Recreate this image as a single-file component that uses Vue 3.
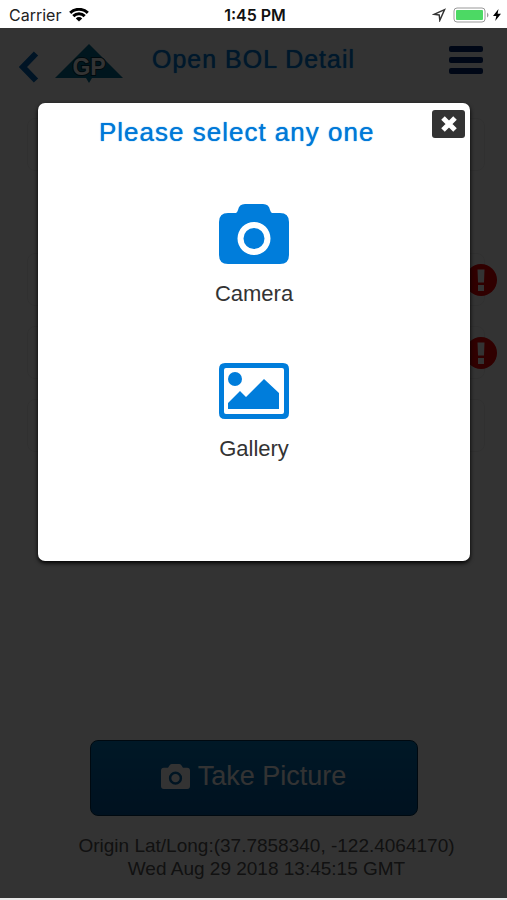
<script setup>
const options = [
  { id: 'camera', label: 'Camera' },
  { id: 'gallery', label: 'Gallery' },
]
const fields = [
  { id: 1, invalid: false, wide: true },
  { id: 2, invalid: true },
  { id: 3, invalid: true },
  { id: 4, invalid: false },
]
</script>

<template>
  <div class="app">
    <div class="status">
      <div class="status-left">
        <span class="carrier">Carrier</span>
        <svg class="wifi" viewBox="0 0 20 14" aria-hidden="true">
          <path d="M1.2 4.9A12.6 12.6 0 0 1 18.8 4.9" />
          <path d="M4.3 8.1A8.2 8.2 0 0 1 15.7 8.1" />
          <path class="dot" d="M6.8 10.4A4.6 4.6 0 0 1 13.2 10.4L10 13.6Z" />
        </svg>
      </div>
      <span class="clock">1:45 PM</span>
      <div class="status-right">
        <svg class="arrow" viewBox="0 0 14 14" aria-hidden="true">
          <path d="M12.6 1.6L2 6.4L7.2 7L7.8 12.4Z" />
        </svg>
        <svg class="battery" viewBox="0 0 36 16" aria-hidden="true">
          <rect class="shell" x="1" y="1" width="31" height="14" rx="3" />
          <rect class="charge" x="3" y="3" width="27" height="10" rx="1" />
          <path class="cap" d="M34 5.5Q35.500 6.5 35.500 8T34 10.5Z" />
        </svg>
        <svg class="bolt" viewBox="0 0 8 12" aria-hidden="true">
          <path d="M5.5 0L0 7H3.3L2.2 12L8 4.7H4.6Z" />
        </svg>
      </div>
    </div>

    <div class="screen">
      <header class="bar">
        <button class="icon-btn back" aria-label="Back">
          <svg viewBox="0 0 20 32" aria-hidden="true"><path d="M17 2.500L4 16L17 29.500" /></svg>
        </button>
        <svg class="logo" viewBox="0 0 68 40" role="img" aria-label="GP">
          <path d="M34 0L68 34H37L34 39L31 34H0Z" />
          <text x="34" y="31" text-anchor="middle">GP</text>
        </svg>
        <h1>Open BOL Detail</h1>
        <button class="icon-btn menu" aria-label="Menu">
          <svg viewBox="0 0 34 30" aria-hidden="true">
            <rect width="34" height="6" rx="2" />
            <rect y="11" width="34" height="6" rx="2" />
            <rect y="22" width="34" height="6" rx="2" />
          </svg>
        </button>
      </header>

      <div class="fields">
        <div v-for="f in fields" :key="f.id" class="field" :class="{ spaced: f.wide }">
          <div class="box"></div>
          <svg v-if="f.invalid" viewBox="0 0 32 32" aria-hidden="true">
            <circle cx="16" cy="16" r="16" />
            <path d="M12.500 5.500H19.500L19 18.500H13Z M13 21H19V27H13Z" />
          </svg>
        </div>
      </div>

      <footer class="foot">
        <button class="take">
          <svg viewBox="0 0 70 60" aria-hidden="true">
            <path fill-rule="evenodd" d="M7 9H17L20 4Q22 0 26 0H44Q48 0 50 4L53 9H63Q70 9 70 16V53Q70 60 63 60H7Q0 60 0 53V16Q0 9 7 9ZM35 18A16 16 0 1 0 35 50A16 16 0 1 0 35 18ZM35 24A10 10 0 1 1 35 44A10 10 0 1 1 35 24Z" />
          </svg>
          <span>Take Picture</span>
        </button>
        <p>Origin Lat/Long:(37.7858340, -122.4064170)<br>Wed Aug 29 2018 13:45:15 GMT</p>
      </footer>

      <div class="overlay">
        <section class="dialog" role="dialog" aria-labelledby="dialog-title">
          <div class="dialog-head">
            <h2 id="dialog-title">Please select any one</h2>
            <button class="close" aria-label="Close">
              <svg viewBox="0 0 18 18" aria-hidden="true"><path d="M3 3L15 15M15 3L3 15" /></svg>
            </button>
          </div>
          <div class="options">
            <button v-for="o in options" :key="o.id" class="option">
              <svg v-if="o.id === 'camera'" viewBox="0 0 70 60" aria-hidden="true">
                <path fill-rule="evenodd" d="M9 9H17Q18 9 19 6Q20 0 26 0H44Q50 0 51 6Q52 9 53 9H61Q70 9 70 18V51Q70 60 61 60H9Q0 60 0 51V18Q0 9 9 9ZM35 18A16.500 16.500 0 1 0 35 51A16.500 16.500 0 1 0 35 18ZM35 24A10.500 10.500 0 1 1 35 45A10.500 10.500 0 1 1 35 24Z" />
              </svg>
              <svg v-else viewBox="0 0 70 56" aria-hidden="true">
                <path fill-rule="evenodd" d="M6 0H64Q70 0 70 6V50Q70 56 64 56H6Q0 56 0 50V6Q0 0 6 0ZM7 5Q5 5 5 7V49Q5 51 7 51H63Q65 51 65 49V7Q65 5 63 5Z" />
                <circle cx="16" cy="16" r="7" />
                <path d="M9 46V40L21 28L27 34L45 16L60 30V46Z" />
              </svg>
              <span>{{ o.label }}</span>
            </button>
          </div>
        </section>
      </div>
    </div>
  </div>
</template>

<style>
body {
  background: #e9e9e9;
}
</style>

<style scoped>
.app {
  min-height: 100vh;
  box-sizing: border-box;
  padding-bottom: 2px;
  display: flex;
  flex-direction: column;
  font-family: "Liberation Sans", Arial, sans-serif;
}
button {
  font-family: inherit;
  border: 0;
  background: none;
  padding: 0;
  cursor: pointer;
}
svg {
  display: block;
}
.status {
  height: 28px;
  box-sizing: border-box;
  padding: 2px 6px 0 9px;
  display: grid;
  grid-template-columns: 1fr auto 1fr;
  align-items: center;
  background: #fff;
  color: #222;
  font-family: Inter, "Liberation Sans", sans-serif;
  font-size: 16px;
}
.status-left,
.status-right {
  display: flex;
  align-items: center;
  gap: 8px;
}
.status-right {
  justify-content: flex-end;
  gap: 4px;
}
.clock {
  font-weight: 600;
  color: #111;
}
.wifi {
  width: 20px;
  height: 14px;
  fill: none;
  stroke: #000;
  stroke-width: 3;
}
.wifi .dot {
  fill: #000;
  stroke: none;
}
.arrow {
  width: 14px;
  height: 14px;
  margin-right: 3px;
  fill: none;
  stroke: #333;
  stroke-width: 1.4;
}
.battery {
  width: 36px;
  height: 16px;
}
.shell {
  fill: #fff;
  stroke: #999;
}
.charge {
  fill: #4cd964;
}
.cap {
  fill: #999;
}
.bolt {
  width: 8px;
  height: 12px;
}
.screen {
  flex: 1;
  position: relative;
  display: flex;
  flex-direction: column;
  background: #fff;
}
.bar {
  height: 70px;
  box-sizing: border-box;
  padding: 16px 24px 0 19px;
  display: flex;
  align-items: flex-start;
}
.back {
  padding-top: 7px;
}
.back svg {
  width: 20px;
  height: 32px;
  fill: none;
  stroke: #0066b8;
  stroke-width: 6;
}
.logo {
  width: 68px;
  height: 40px;
  margin-left: 16px;
  fill: #006f94;
}
.logo text {
  font-size: 23px;
  font-weight: 700;
  fill: #fff;
  stroke: #003040;
  stroke-width: 2;
  paint-order: stroke;
}
h1,
h2 {
  margin: 0;
  font-size: 25px;
  line-height: 30px;
  font-weight: 400;
  letter-spacing: 1px;
  color: #0079d8;
  text-shadow: 0 0 1px #0079d8;
}
h1 {
  flex: 1;
  margin-left: 29px;
}
.menu {
  padding-top: 2px;
}
.menu svg {
  width: 34px;
  height: 30px;
  fill: #00256e;
}
.fields {
  flex: 1;
  display: flex;
  flex-direction: column;
  gap: 20px;
  padding: 20px 10px 0 27px;
}
.field {
  display: flex;
  align-items: center;
}
.field.spaced {
  margin-bottom: 62px;
}
.box {
  flex: 1;
  height: 51px;
  margin-right: 12px;
  border: 1px solid #f0f0f0;
  border-radius: 8px;
}
.field svg {
  width: 32px;
  height: 32px;
  margin-left: -32px;
}
.field circle {
  fill: #f00000;
}
.field path {
  fill: #fff;
}
.foot {
  display: flex;
  flex-direction: column;
  align-items: center;
  padding: 0 80px 18px 80px;
}
.take {
  width: 100%;
  max-width: 328px;
  height: 76px;
  display: flex;
  align-items: center;
  justify-content: center;
  gap: 8px;
  padding-bottom: 4px;
  border: 1px solid #003050;
  border-radius: 8px;
  background: linear-gradient(#007ac0, #00569c);
  color: #fff;
  font-size: 27px;
}
.take svg {
  width: 29px;
  height: 25px;
  fill: #fff;
}
.foot p {
  margin: 18px -20px 0 6px;
  text-align: center;
  white-space: nowrap;
  font-size: 19px;
  line-height: 23px;
  color: #555;
}
.overlay {
  position: absolute;
  inset: 0;
  padding: 75px 37px 0 38px;
  background: rgba(0, 0, 0, 0.8);
}
.dialog {
  height: 458px;
  box-sizing: border-box;
  border-radius: 7px;
  background: #fff;
  box-shadow: 0 2px 4px #000;
}
.dialog-head {
  display: flex;
  align-items: flex-start;
  padding: 7px 5px 0 61px;
}
h2 {
  flex: 1;
  font-size: 26px;
  padding-top: 7px;
}
.close {
  width: 33px;
  height: 28px;
  display: grid;
  place-items: center;
  border-radius: 3px;
  background: #333;
}
.close svg {
  width: 18px;
  height: 18px;
  fill: none;
  stroke: #fff;
  stroke-width: 5;
}
.options {
  display: flex;
  flex-direction: column;
  align-items: center;
  gap: 56px;
  padding-top: 57px;
}
.option {
  display: flex;
  flex-direction: column;
  align-items: center;
  gap: 17px;
  font-size: 22px;
  line-height: 26px;
  color: #333;
}
.option svg {
  width: 70px;
  fill: #007ddb;
}
</style>
